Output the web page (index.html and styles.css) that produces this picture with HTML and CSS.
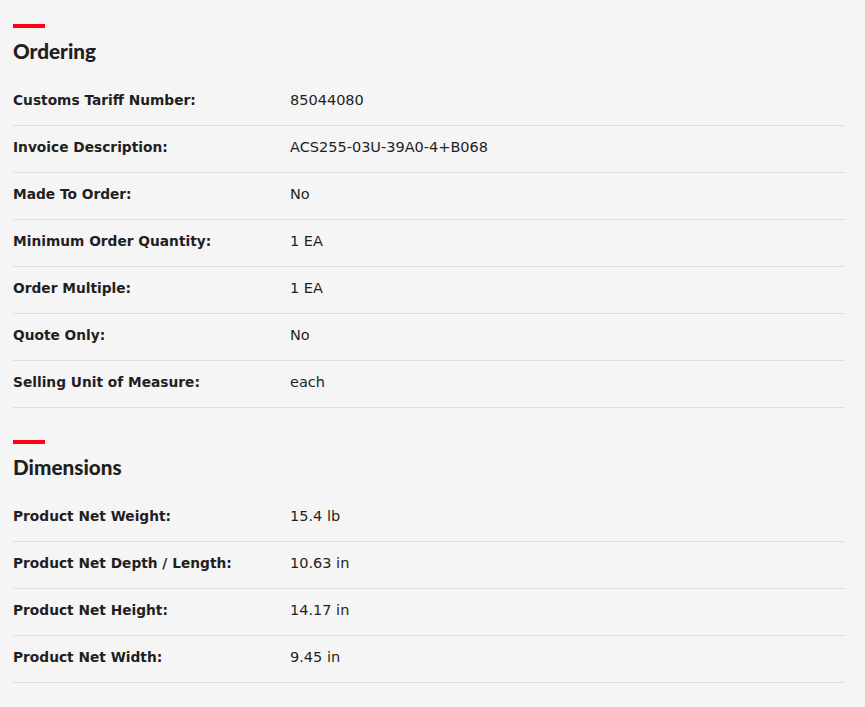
FILE: index.html
```html
<!DOCTYPE html>
<html>
<head>
<meta charset="utf-8">
<link rel="stylesheet" href="styles.css">
</head>
<body>
<div class="page">
  <section class="section">
    <div class="bar"></div>
    <h2 class="title">Ordering</h2>
    <div class="rows">
      <div class="row"><div class="label">Customs Tariff Number:</div><div class="value">85044080</div></div>
      <div class="row"><div class="label">Invoice Description:</div><div class="value">ACS255-03U-39A0-4+B068</div></div>
      <div class="row"><div class="label">Made To Order:</div><div class="value">No</div></div>
      <div class="row"><div class="label">Minimum Order Quantity:</div><div class="value">1 EA</div></div>
      <div class="row"><div class="label">Order Multiple:</div><div class="value">1 EA</div></div>
      <div class="row"><div class="label">Quote Only:</div><div class="value">No</div></div>
      <div class="row"><div class="label">Selling Unit of Measure:</div><div class="value">each</div></div>
    </div>
  </section>
  <section class="section">
    <div class="bar"></div>
    <h2 class="title">Dimensions</h2>
    <div class="rows">
      <div class="row"><div class="label">Product Net Weight:</div><div class="value">15.4 lb</div></div>
      <div class="row"><div class="label">Product Net Depth / Length:</div><div class="value">10.63 in</div></div>
      <div class="row"><div class="label">Product Net Height:</div><div class="value">14.17 in</div></div>
      <div class="row"><div class="label">Product Net Width:</div><div class="value">9.45 in</div></div>
    </div>
  </section>
</div>
</body>
</html>
```
FILE: styles.css
```css
html, body {
  margin: 0;
  padding: 0;
  background: #f5f5f5;
}
body {
  font-family: "DejaVu Sans", "Liberation Sans", sans-serif;
  color: #1f1f1f;
}
.page {
  padding: 24px 21px 0 13px;
  display: flex;
  flex-direction: column;
  gap: 32px;
}
.bar {
  width: 32px;
  height: 4px;
  background: #ff000f;
}
.title {
  margin: 11px 0 16px;
  font-family: Lato, "DejaVu Sans", sans-serif;
  font-size: 20.7px;
  line-height: 24px;
  font-weight: 900;
}
.row {
  display: flex;
  align-items: center;
  border-bottom: 1px solid #dcdcdc;
  font-size: 14.5px;
  padding-bottom: 4px;
  box-sizing: border-box;
  height: 47px;
}
.label {
  width: 277px;
  font-weight: 700;
  font-size: 13.75px;
}
.value {
  font-weight: 400;
}
```
